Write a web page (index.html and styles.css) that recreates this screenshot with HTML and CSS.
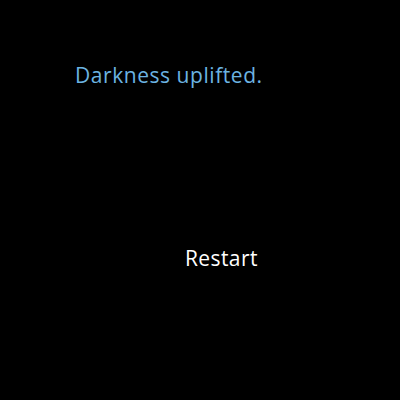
FILE: index.html
```html
<!DOCTYPE html>
<html>
<head>
<meta charset="utf-8">
<link rel="stylesheet" href="styles.css">
</head>
<body>
<div class="screen">
  <p class="message">Darkness uplifted.</p>
  <div class="actions"><button class="restart">Restart</button></div>
</div>
</body>
</html>
```
FILE: styles.css
```css
html, body {
  margin: 0;
  padding: 0;
  background: #000;
  width: 400px;
  height: 400px;
  overflow: hidden;
}
.screen {
  display: flex;
  flex-direction: column;
  padding: 61px 0 0 75px;
  font-family: "Open Sans", sans-serif;
}
.message {
  margin: 0;
  font-size: 21px;
  line-height: 28px;
  letter-spacing: 0.55px;
  color: #6cb4e2;
}
.actions {
  padding: 155px 0 0 110px;
}
.restart {
  background: none;
  border: 0;
  padding: 0;
  font-family: "Open Sans", sans-serif;
  font-size: 21px;
  line-height: 28px;
  letter-spacing: 0.4px;
  color: #fff;
}
```
